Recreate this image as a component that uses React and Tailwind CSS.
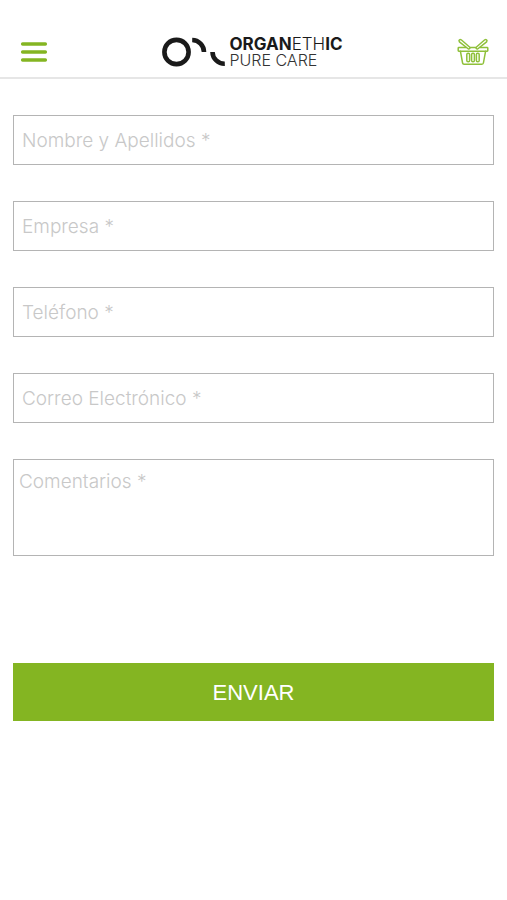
import { useState } from 'react';

const fields = [
  { name: 'nombre', label: 'Nombre y Apellidos', type: 'text' },
  { name: 'empresa', label: 'Empresa', type: 'text' },
  { name: 'telefono', label: 'Teléfono', type: 'tel' },
  { name: 'correo', label: 'Correo Electrónico', type: 'email' },
];

const MenuIcon = () => (
  <svg width="28" height="22" viewBox="0 0 28 22" fill="none" stroke="#84b522" strokeWidth="3.4" strokeLinecap="round" aria-hidden="true">
    <path d="M2.6 3H25.4M2.6 11H25.4M2.6 19H25.4" />
  </svg>
);

const BasketIcon = () => (
  <svg width="32" height="30" viewBox="0 0 32 30" fill="none" stroke="#8fc03a" strokeWidth="1.5" strokeLinejoin="round" strokeLinecap="round" aria-hidden="true">
    <path d="M9 10.6H1.8Q1.2 10.6 1.2 11.2V13.6Q1.2 14.2 1.8 14.2H30.2Q30.8 14.2 30.8 13.6V11.2Q30.8 10.6 30.2 10.6H23" />
    <path d="M13.4 10.6H18.6" />
    <path d="M3.4 14.2L5.6 26Q5.8 27.2 7 27.2H25Q26.2 27.2 26.4 26L28.6 14.2" />
    <path d="M2 3.6Q2.6 2 4.2 2.8L12.8 10.2Q13.4 11.8 11.4 12L2.4 4.8Z" />
    <path d="M30 3.6Q29.4 2 27.8 2.8L19.2 10.2Q18.6 11.8 20.6 12L29.6 4.8Z" />
    <rect x="9.8" y="16.2" width="2.8" height="8.6" rx="1.3" />
    <rect x="14.6" y="16.2" width="2.8" height="8.6" rx="1.3" />
    <rect x="19.4" y="16.2" width="2.8" height="8.6" rx="1.3" />
  </svg>
);

const Logo = () => (
  <a href="#" className="flex items-center gap-1 text-[#1a1a1a]">
    <svg width="63" height="30" viewBox="0 0 63 30" fill="none" stroke="currentColor" strokeWidth="4.6" aria-hidden="true">
      <circle cx="14.5" cy="15" r="12.1" />
      <path d="M30.2 3A12 12 0 0 1 42 15" />
      <path d="M50.5 15A12 12 0 0 0 62.8 26.8" />
    </svg>
    <span className="flex flex-col">
      <span className="flex text-[17px] leading-4">
        <span className="font-bold">ORGAN</span>
        <span className="font-light">ETH</span>
        <span className="font-bold">IC</span>
      </span>
      <span className="text-base leading-4 font-light text-[#333]">PURE CARE</span>
    </span>
  </a>
);

const App = () => {
  const [values, setValues] = useState({});

  const handleChange = (e) => {
    setValues({ ...values, [e.target.name]: e.target.value });
  };

  const handleSubmit = (e) => {
    e.preventDefault();
  };

  return (
    <div className="min-h-screen bg-white font-['Inter','Liberation_Sans',sans-serif]">
      <header className="flex items-center justify-between border-b-2 border-[#e6e6e6] pt-9 pr-[18px] pb-[9px] pl-5">
        <button type="button" aria-label="Menú">
          <MenuIcon />
        </button>
        <Logo />
        <button type="button" aria-label="Cesta">
          <BasketIcon />
        </button>
      </header>

      <form onSubmit={handleSubmit} noValidate className="flex flex-col px-[13px] pt-9">
        <div className="flex flex-col gap-9">
          {fields.map((field) => (
            <input
              key={field.name}
              type={field.type}
              name={field.name}
              aria-label={field.label}
              placeholder={`${field.label} *`}
              value={values[field.name] || ''}
              onChange={handleChange}
              className="h-[50px] w-full border border-[#b4b4b4] px-2 text-[19px] font-light outline-none placeholder:text-[#c8c8c8]"
            />
          ))}
          <textarea
            name="comentarios"
            aria-label="Comentarios"
            placeholder="Comentarios *"
            value={values.comentarios || ''}
            onChange={handleChange}
            className="h-[97px] w-full resize-none border border-[#b4b4b4] px-[5px] py-2 text-[19px] font-light outline-none placeholder:text-[#c8c8c8]"
          />
        </div>
        <button type="submit" className="mt-[107px] h-[58px] bg-[#84b522] font-['Liberation_Sans',sans-serif] text-[22px] text-white">
          ENVIAR
        </button>
      </form>
    </div>
  );
};

export default App;
